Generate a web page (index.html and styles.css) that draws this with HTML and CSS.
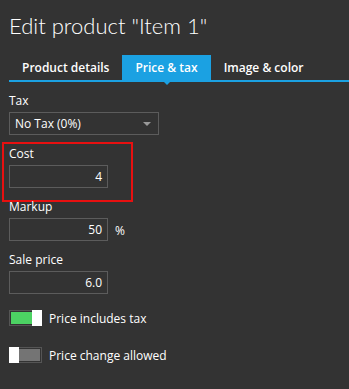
FILE: index.html
```html
<!DOCTYPE html>
<html lang="en">
  <head>
    <meta charset="UTF-8" />
    <meta name="viewport" content="width=device-width, initial-scale=1.0" />
    <title>Edit product</title>
    <link rel="stylesheet" href="styles.css">
  </head>
  <body>
    <div class="page">
      <h1 class="title">Edit product "Item 1"</h1>

      <div class="tabs">
        <div class="tab">Product details</div>
        <div class="tab active">Price &amp; tax</div>
        <div class="tab">Image &amp; color</div>
      </div>

      <div class="form">
        <div class="field">
          <div class="label">Tax</div>
          <div class="select">
            <span>No Tax (0%)</span>
            <span class="caret"></span>
          </div>
        </div>

        <div class="field highlight">
          <div class="label">Cost</div>
          <div class="input">4</div>
        </div>

        <div class="field">
          <div class="label">Markup</div>
          <div class="row">
            <div class="input">50</div>
            <span class="unit">%</span>
          </div>
        </div>

        <div class="field">
          <div class="label">Sale price</div>
          <div class="input">6.0</div>
        </div>

        <div class="toggle-row">
          <div class="toggle on"><div class="knob"></div></div>
          <span>Price includes tax</span>
        </div>

        <div class="toggle-row">
          <div class="toggle"><div class="knob"></div></div>
          <span>Price change allowed</span>
        </div>
      </div>
    </div>
  </body>
</html>
```

FILE: styles.css
```css
* {
  margin: 0;
  padding: 0;
  box-sizing: border-box;
}

body {
  background: #333333;
  color: #ffffff;
  font-family: "Open Sans", "Noto Sans", sans-serif;
  font-size: 12px;
  overflow: hidden;
}

.page {
  padding: 12px 0 0 9px;
}

.title {
  font-family: "Lato", "Open Sans", sans-serif;
  font-weight: 300;
  font-size: 22px;
  line-height: 28px;
}

/* Tabs */
.tabs {
  display: flex;
  margin-top: 15px;
  border-bottom: 2px solid #1ba1e2;
  position: relative;
}

.tab {
  height: 25px;
  line-height: 25px;
  padding: 0 13px;
  font-weight: 600;
}

.tab.active {
  background: #1ba1e2;
  position: relative;
}

.tab.active::after {
  content: "";
  position: absolute;
  left: 50%;
  bottom: -5px;
  margin-left: -3px;
  border-left: 3px solid transparent;
  border-right: 3px solid transparent;
  border-top: 3px solid #1ba1e2;
}

/* Form */
.form {
  display: flex;
  flex-direction: column;
  padding-top: 10px;
}

.field {
  display: flex;
  flex-direction: column;
  margin-bottom: 10px;
}

.label {
  line-height: 17px;
  margin-bottom: 3px;
}

.select {
  width: 150px;
  height: 23px;
  border: 1px solid #5c5c5c;
  display: flex;
  align-items: center;
  justify-content: space-between;
  padding: 0 7px 0 5px;
}

.caret {
  border-left: 4px solid transparent;
  border-right: 4px solid transparent;
  border-top: 4px solid #9a9a9a;
}

.highlight {
  margin: -3px 0 -4px -7px;
  padding: 1px 0 12px 5px;
  width: 131px;
  border: 2px solid #e81010;
}

.input {
  width: 99px;
  height: 23px;
  border: 1px solid #5c5c5c;
  text-align: right;
  line-height: 21px;
  padding-right: 5px;
}

.row {
  display: flex;
  align-items: center;
  gap: 7px;
}

.unit {
  padding-top: 2px;
}

/* Toggles */
.toggle-row {
  display: flex;
  align-items: center;
  gap: 7px;
  height: 16px;
  margin-top: 6px;
}

.toggle-row + .toggle-row {
  margin-top: 21px;
}

.toggle {
  width: 33px;
  height: 16px;
  border: 1px solid #555555;
  padding: 1px;
  position: relative;
  display: flex;
}

.toggle::before {
  content: "";
  flex: 1;
  background: #747474;
}

.toggle.on::before {
  background: #4cd263;
}

.knob {
  position: absolute;
  top: -1px;
  left: -1px;
  width: 10px;
  height: 16px;
  background: #ffffff;
}

.toggle.on .knob {
  left: auto;
  right: -1px;
}
```
